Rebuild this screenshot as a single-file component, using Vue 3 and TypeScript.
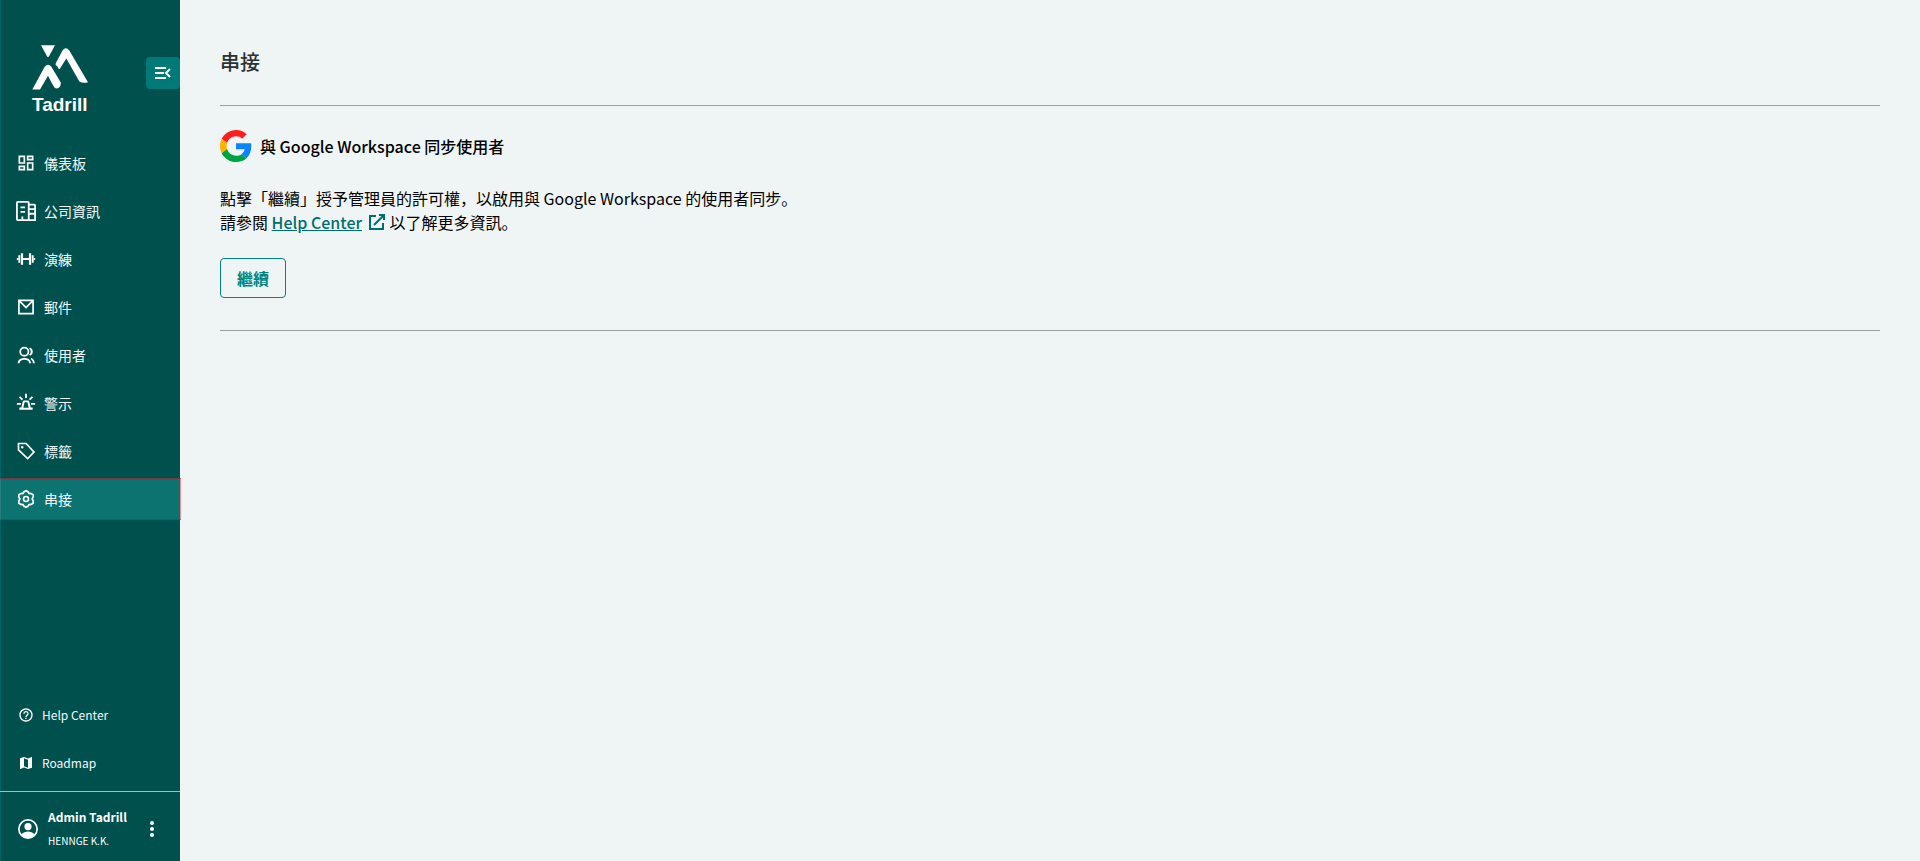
<script setup lang="ts">
interface NavItem {
  label: string
  icon: string
  active?: boolean
}

const mainNav: NavItem[] = [
  { label: '儀表板', icon: 'dashboard' },
  { label: '公司資訊', icon: 'company' },
  { label: '演練', icon: 'drill' },
  { label: '郵件', icon: 'mail' },
  { label: '使用者', icon: 'users' },
  { label: '警示', icon: 'alert' },
  { label: '標籤', icon: 'tag' },
  { label: '串接', icon: 'settings', active: true },
]

const icons: Record<string, string> = {
  dashboard:
    'M19 5v2h-4V5h4M9 5v6H5V5h4m10 8v6h-4v-6h4M9 17v2H5v-2h4M21 3h-8v6h8V3zM11 3H3v10h8V3zm10 8h-8v10h8V11zm-10 4H3v6h8v-6z',
  company:
    'M2 0h11a2 2 0 0 1 2 2v1h5a2 2 0 0 1 2 2v17H2a2 2 0 0 1-2-2V2a2 2 0 0 1 2-2zM2 2v18h4v-3h2v3h5V2zm13 3v3h5V5zm0 5v3h5v-3zm0 5v5h5v-5zM5 6h5v2H5zm0 5h5v2H5z',
  drill:
    'M5.800 5h2.700v5.700h7V5h2.700v14h-2.700v-5.700h-7V19H5.800zM2.800 7.500h2.200v9H2.800zM19 7.500h2.200v9H19zM1 10.700h2v2.600H1zM21 10.700h2v2.600h-2z',
  mail: 'M2.500 3h19v18h-19zM4.500 6.600V19h15V6.600L12 14zM5.800 5L12 11.200 18.200 5z',
  users:
    'M10 2a6 6 0 1 1 0 12 6 6 0 0 1 0-12zm0 2.200a3.800 3.800 0 1 0 0 7.600 3.800 3.800 0 0 0 0-7.600zM2 22c0-4 3-6.500 8-6.500s8 2.500 8 6.500h-2.300c0-2.600-2-4.300-5.700-4.300S4.300 19.400 4.300 22zM17 3a5.500 5.500 0 0 1 0 10l-1.200-1.600a4 4 0 0 0 0-6.800zM18.300 15.200c2.700 1 4.200 3.700 4.200 6.800h-2.200c0-2.500-1-4-2.500-5z',
  alert:
    'M10.900 1h2.200v5h-2.200zM3.500 5.300L5 3.800l3.500 3.500L7 8.800zM20.500 5.300L19 3.800l-3.500 3.500L17 8.800zM1 12h5v2.200H1zM18 12h5v2.200h-5zM10 9h4a2 2 0 0 1 2 1.500L17.600 17.500H20V20H4v-2.500h2.400L8 10.500A2 2 0 0 1 10 9zm.300 2.200L8.800 17.600h6.400l-1.500-6.400z',
  tag: 'M2 2h10.500L23 13.200 14 22.500 2 11zm2 2v6.200l10 9.500 6.200-6.400L11.600 4zM7.500 6a1.500 1.500 0 1 1 0 3 1.500 1.500 0 0 1 0-3z',
  settings:
    'M12 1l3 1.500 1.200 1.800 2.300.200 3 1.800.200 3.400L20.500 12l1.200 2.300-.200 3.400-3 1.800-2.300.200L15 21.500 12 23l-3-1.500-1.200-1.800-2.300-.200-3-1.800-.200-3.400L3.500 12 2.300 9.700l.200-3.400 3-1.800 2.300-.200L9 2.500zm0 2.300-1.600.800L9 6.200l-3 .300-1.600 1L4.300 9.200 5.800 12l-1.500 2.800.100 1.700 1.600 1 3 .300 1.400 2.100 1.600.800 1.600-.800 1.400-2.100 3-.300 1.600-1 .100-1.700L18.200 12l1.500-2.800-.100-1.700-1.600-1-3-.300-1.400-2.100zM12 8a4 4 0 1 1 0 8 4 4 0 0 1 0-8zm0 2a2 2 0 1 0 0 4 2 2 0 0 0 0-4z',
}

const viewBoxOf = (icon: string): string =>
  icon === 'company' ? '0 0 22 22' : '0 0 24 24'
</script>

<template>
  <div class="app">
    <aside class="sidebar">
      <header class="brand">
        <a class="logo" href="#">
          <svg class="logo-mark" viewBox="96 74 168 134" aria-hidden="true">
            <path d="M123 74h42l-18 33q-3 5-6 0z" />
            <path
              d="M188 89q10-12 20 1l56 95q-15 4-26-2l-39-69-19 30q-2 4-5-1-3-7-7-9-3-2 0-7z"
            />
            <path
              d="M97 207l37-68q10-12 20 0l28 46q2 6-2 13-7 10-16 4-6-8-20-36l-24 41q-10 0-23 0z"
            />
          </svg>
          <span class="logo-name">Tadrill</span>
        </a>
        <button class="toggle" type="button" aria-label="Collapse menu">
          <svg viewBox="0 0 16 12" aria-hidden="true">
            <path d="M0 1h11M0 6h9M0 11h11M15 2l-4 4 4 4" />
          </svg>
        </button>
      </header>

      <nav class="nav">
        <a
          v-for="item in mainNav"
          :key="item.icon"
          href="#"
          class="nav-item"
          :class="{ active: item.active }"
        >
          <svg class="nav-icon" :viewBox="viewBoxOf(item.icon)" aria-hidden="true">
            <path fill-rule="evenodd" :d="icons[item.icon]" />
          </svg>
          {{ item.label }}
        </a>
      </nav>

      <nav class="nav support">
        <a href="#" class="nav-item small">
          <svg class="nav-icon" viewBox="0 0 24 24" aria-hidden="true">
            <path
              d="M11 18h2v-2h-2v2zm1-16C6.480 2 2 6.480 2 12s4.480 10 10 10 10-4.480 10-10S17.520 2 12 2zm0 18c-4.410 0-8-3.590-8-8s3.590-8 8-8 8 3.590 8 8-3.590 8-8 8zm0-14c-2.210 0-4 1.790-4 4h2c0-1.100.900-2 2-2s2 .900 2 2c0 2-3 1.750-3 5h2c0-2.250 3-2.500 3-5 0-2.210-1.790-4-4-4z"
            />
          </svg>
          Help Center
        </a>
        <a href="#" class="nav-item small">
          <svg class="nav-icon" viewBox="0 0 24 24" aria-hidden="true">
            <path
              d="M20.500 3l-.160.030L15 5.100 9 3 3.360 4.900c-.210.070-.360.250-.360.480V20.500c0 .280.220.500.500.500l.160-.030L9 18.900l6 2.100 5.640-1.900c.210-.070.360-.250.360-.480V3.500c0-.280-.220-.500-.500-.500zM15 19l-6-2.110V5l6 2.110V19z"
            />
          </svg>
          Roadmap
        </a>
      </nav>

      <footer class="account">
        <svg class="avatar" viewBox="0 0 20 20" aria-hidden="true">
          <path
            fill-rule="evenodd"
            d="M10 0a10 10 0 1 1 0 20 10 10 0 0 1 0-20zm0 1.800A8.200 8.200 0 0 0 3.700 15.200c1.500-1.800 4-2.700 6.300-2.700s4.800.900 6.300 2.700A8.200 8.200 0 0 0 10 1.800zM10 4a3.600 3.600 0 1 1 0 7.200A3.600 3.600 0 0 1 10 4z"
          />
        </svg>
        <div class="who">
          <strong>Admin Tadrill</strong>
          <span>HENNGE K.K.</span>
        </div>
        <button class="more" type="button" aria-label="Account menu">
          <svg viewBox="0 0 4 16" aria-hidden="true">
            <circle cx="2" cy="2" r="2" />
            <circle cx="2" cy="8" r="2" />
            <circle cx="2" cy="14" r="2" />
          </svg>
        </button>
      </footer>
    </aside>

    <main class="content">
      <h1>串接</h1>
      <section class="card">
        <h2>
          <svg class="google" viewBox="0 0 48 48" aria-hidden="true">
            <path fill="#ff1d1d" d="M24 9.500c3.540 0 6.710 1.220 9.210 3.600l6.850-6.850C35.900 2.380 30.470 0 24 0 14.620 0 6.510 5.380 2.560 13.220l7.980 6.190C12.430 13.720 17.740 9.500 24 9.500z" />
            <path fill="#0b84fb" d="M46.980 24.550c0-1.570-.150-3.090-.380-4.550H24v9.020h12.940c-.580 2.960-2.260 5.480-4.780 7.180l7.730 6c4.510-4.180 7.090-10.360 7.090-17.650z" />
            <path fill="#fdb300" d="M10.530 28.590c-.480-1.450-.760-2.990-.760-4.590s.270-3.140.760-4.590l-7.980-6.190C.920 16.460 0 20.120 0 24c0 3.880.920 7.540 2.560 10.780l7.970-6.190z" />
            <path fill="#00a344" d="M24 48c6.480 0 11.930-2.130 15.890-5.810l-7.730-6c-2.150 1.450-4.920 2.300-8.160 2.300-6.260 0-11.570-4.220-13.470-9.910l-7.980 6.190C6.510 42.620 14.620 48 24 48z" />
          </svg>
          與 Google Workspace 同步使用者
        </h2>
        <p>
          點擊「繼續」授予管理員的許可權，以啟用與 Google Workspace 的使用者同步。<br />
          請參閱
          <a class="help" href="#"><span>Help Center</span><svg viewBox="0 0 16 16" aria-hidden="true">
              <path d="M7 2H1v13h13V9M10 1h5v5M15 1L5 11" />
            </svg></a>
          以了解更多資訊。
        </p>
        <button class="continue" type="button">繼續</button>
      </section>
    </main>
  </div>
</template>

<style>
body {
  margin: 0;
  background: #eff5f5;
}
</style>

<style scoped>
.app {
  display: flex;
  min-height: 100vh;
  font-family: 'Noto Sans CJK JP', 'Noto Sans CJK TC', sans-serif;
  color: #000;
}

.sidebar {
  box-sizing: border-box;
  flex: none;
  display: flex;
  flex-direction: column;
  width: 180px;
  border-left: 1px solid #006462;
  background: #00504e;
  color: #fff;
}

.brand {
  display: flex;
  justify-content: space-between;
  align-items: flex-start;
  height: 142px;
}

.logo {
  display: flex;
  flex-direction: column;
  margin: 45px 0 0 31px;
  color: #fff;
  text-decoration: none;
}

.logo-mark {
  width: 56px;
  height: 45px;
  fill: #fff;
}

.logo-name {
  margin-top: 4px;
  font: bold 19px/22px 'Liberation Sans', Arial, sans-serif;
}

.toggle {
  display: flex;
  align-items: center;
  justify-content: center;
  width: 34px;
  height: 32px;
  margin-top: 57px;
  padding: 0;
  border: 0;
  border-radius: 4px;
  background: #007977;
}

.toggle svg {
  width: 16px;
  height: 12px;
  fill: none;
  stroke: #fff;
  stroke-width: 2;
}

.nav {
  display: flex;
  flex-direction: column;
  gap: 6px;
}

.nav-item {
  box-sizing: border-box;
  display: flex;
  align-items: center;
  gap: 8px;
  height: 42px;
  margin: 0 -1px;
  padding-left: 15px;
  border: 1px solid transparent;
  color: #f4f9f9;
  font-size: 14px;
  line-height: 20px;
  text-decoration: none;
}

.nav-item.active {
  border-color: #6f3a43 #f08c96 #6f3a43 #267f7d;
  background: #0d7371;
}

.nav-icon {
  flex: none;
  width: 20px;
  height: 20px;
  fill: #fff;
}

.nav-item.small {
  padding-left: 17px;
  font-size: 12px;
}

.small .nav-icon {
  width: 16px;
  height: 16px;
}

.support {
  margin-top: auto;
  margin-bottom: 7px;
}

.account {
  box-sizing: border-box;
  display: flex;
  align-items: center;
  height: 70px;
  margin-left: -1px;
  padding: 5px 26px 0 18px;
  border-top: 1px solid #9fc0be;
}

.avatar {
  width: 20px;
  height: 20px;
  fill: #fff;
}

.who {
  flex: 1;
  display: flex;
  flex-direction: column;
  gap: 8px;
  margin-left: 10px;
  white-space: nowrap;
}

.who strong {
  font-size: 12px;
  line-height: 16px;
}

.who span {
  font-size: 10px;
  line-height: 16px;
}

.more {
  display: flex;
  padding: 0;
  border: 0;
  background: none;
}

.more svg {
  width: 4px;
  height: 16px;
  fill: #fff;
}

.content {
  flex: 1;
  padding: 48px 40px 0;
}

h1 {
  margin: 0;
  padding-bottom: 29px;
  border-bottom: 1px solid #9aa0a0;
  color: #2b3434;
  font-size: 20px;
  font-weight: 500;
  line-height: 28px;
}

.card {
  padding: 24px 0 32px;
  border-bottom: 1px solid #9aa0a0;
}

h2 {
  display: flex;
  align-items: center;
  gap: 8px;
  margin: 0 0 24px;
  font-size: 16px;
  font-weight: 500;
  line-height: 32px;
}

.google {
  width: 32px;
  height: 32px;
}

p {
  margin: 0 0 24px;
  font-size: 16px;
  line-height: 24px;
}

.help {
  color: #006e6c;
  font-weight: 500;
  text-decoration: none;
}

.help span {
  text-decoration: underline;
}

.help svg {
  width: 16px;
  height: 16px;
  margin: 0 1px 0 7px;
  vertical-align: -1px;
  fill: none;
  stroke: #006e6c;
  stroke-width: 2;
}

.continue {
  display: block;
  height: 40px;
  padding: 0 16px;
  border: 1px solid #008583;
  border-radius: 4px;
  background: none;
  color: #008583;
  font: 700 16px/24px 'Noto Sans CJK JP', 'Noto Sans CJK TC', sans-serif;
}
</style>
